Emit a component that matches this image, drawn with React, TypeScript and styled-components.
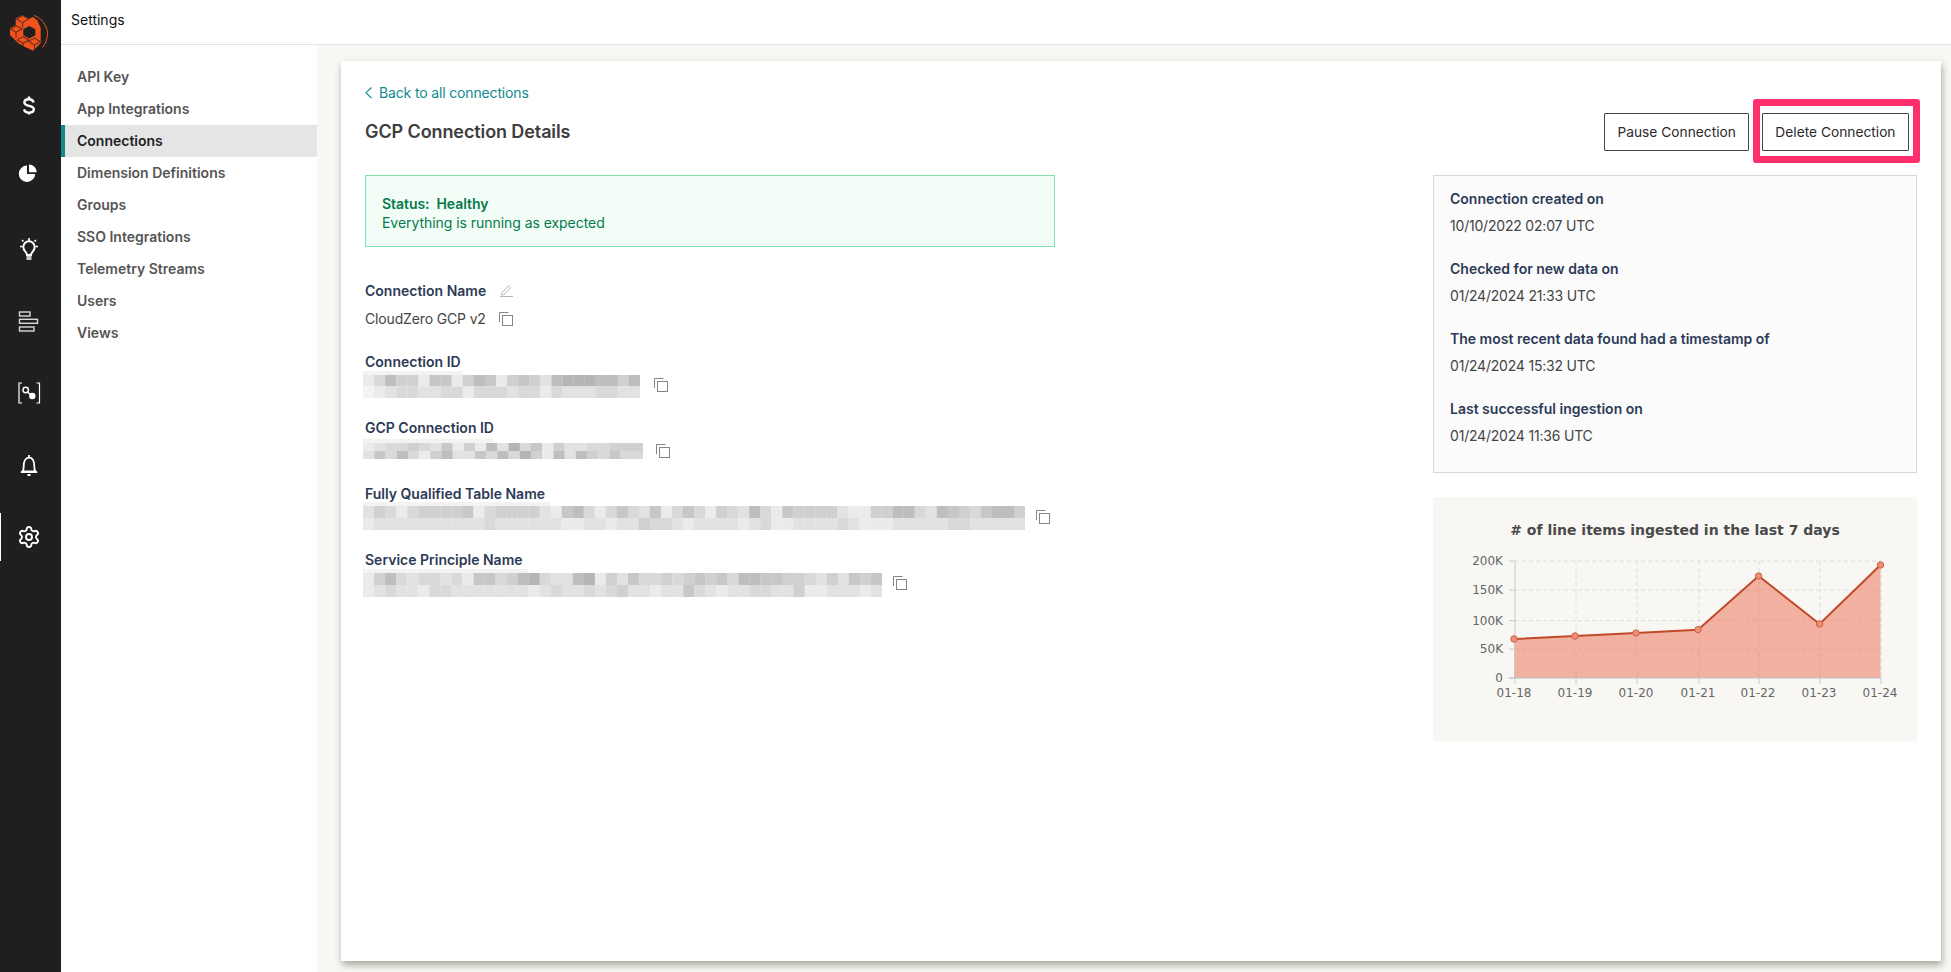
import React from "react";
import styled, { createGlobalStyle } from "styled-components";
import { Settings as SettingsIcon } from "lucide-react";

const GlobalStyle = createGlobalStyle`
  html, body {
    margin: 0;
    padding: 0;
    height: 100%;
    overflow: hidden;
    background: #f8f7f4;
    font-family: Inter, "Liberation Sans", sans-serif;
  }
  * {
    box-sizing: border-box;
  }
`;

const NAV_ITEMS = [
  "API Key",
  "App Integrations",
  "Connections",
  "Dimension Definitions",
  "Groups",
  "SSO Integrations",
  "Telemetry Streams",
  "Users",
  "Views",
];

const INFO_ROWS = [
  { label: "Connection created on", value: "10/10/2022 02:07 UTC" },
  { label: "Checked for new data on", value: "01/24/2024 21:33 UTC" },
  { label: "The most recent data found had a timestamp of", value: "01/24/2024 15:32 UTC" },
  { label: "Last successful ingestion on", value: "01/24/2024 11:36 UTC" },
];

// each string is a row of blurred cells, 0 lightest to 9 darkest
const REDACTED_FIELDS = [
  {
    label: "Connection ID",
    width: 277,
    height: 27,
    top: 0,
    gap: 14,
    iconShift: 0,
    faint: 100,
    rows: ["1364415514651454267776646", "0123322331333233132223322"],
  },
  {
    label: "GCP Connection ID",
    width: 280,
    height: 20,
    top: 2,
    gap: 13,
    iconShift: 3,
    faint: 130,
    rows: ["1233432514162735142233444", "2536314622536374162643533"],
  },
  {
    label: "Fully Qualified Table Name",
    width: 662,
    height: 28,
    top: -1,
    gap: 11,
    iconShift: 2,
    faint: 187,
    rows: [
      "243134444513444421563135325135314326315444421144663265435664",
      "122222222223222222112212243321222212311222232111222223322222",
    ],
  },
  {
    label: "Service Principle Name",
    width: 519,
    height: 28,
    top: 0,
    gap: 11,
    iconShift: 0,
    faint: 165,
    rows: [
      "14632332315534673226714253343454536655443242545",
      "12322133222222212322323422122532122332241122212",
    ],
  },
];

const PLOT_X = [82, 143, 204, 266, 326, 387, 448];
const PLOT_Y = [
  { y: 16, label: "200K" },
  { y: 45, label: "150K" },
  { y: 75.7, label: "100K" },
  { y: 104, label: "50K" },
  { y: 133, label: "0" },
];
const DAYS = ["01-18", "01-19", "01-20", "01-21", "01-22", "01-23", "01-24"];
const POINTS = [
  [81, 94],
  [142, 91],
  [203, 88],
  [265, 84.7],
  [325.6, 31],
  [386.6, 79],
  [447.5, 20],
];

const CopyIcon = () => (
  <CopyGlyph viewBox="0 0 14 14" fill="none" stroke="#858585" strokeWidth="1">
    <path d="M.5 10V.5h9" />
    <rect x="3.5" y="3.5" width="10" height="10" />
  </CopyGlyph>
);

const PencilIcon = () => (
  <svg width="13" height="12" viewBox="0 0 13 12" fill="none" stroke="#adadad" strokeWidth="0.9">
    <path d="M1.500 8.500 8 1.200a1 1 0 0 1 1.500 0l.6.6a1 1 0 0 1 0 1.400L3.700 10H1.500z" />
    <path d="M0 11.500h13" />
  </svg>
);

const Logo = () => (
  <svg width="61" height="60" viewBox="0 0 61 60">
    <path d="M34 15.500c8 2.500 13.500 11 13.500 18 0 6-2.200 10.500-5 14" fill="none" stroke="#f1511b" strokeWidth="1" />
    <path d="M22.700 15l6.300 3.700 4-1.700 4.500 3.500 3.200 7.500v15l-7.400 7.700-8.300-3.700-6.700-3.700L10 35v-6.700l5.700-3.300v-6.700z" fill="#f1511b" />
    <path d="M29.300 26l6 3.300v6l-6 3.300-6-3.300v-6z" fill="#1f1f1f" />
    <g fill="#f1511b" stroke="#1f1f1f" strokeWidth="0.8">
      <path d="M16.500 19l6.200-3.500 5.800 3.500-5.800 3.500z" />
      <path d="M10.500 29l5.500-3.300 6 3.300-6 3.300z" />
      <path d="M17 40l6-3.300 6 3.300-6 3.300z" />
      <path d="M28.500 41.500l6-3.500 5.700 3.500-5.700 3.500z" />
      <path d="M22.700 22.500v5M16 32.300v5.500M23 43.300v3.500M34.500 45v5.500" fill="none" />
    </g>
  </svg>
);

const RailIcon = ({ name }: { name: string }) => {
  if (name === "dollar") {
    return (
      <svg width="32" height="32" viewBox="0 0 32 32" fill="none" stroke="#fff" strokeWidth="2.400">
        <path d="M20.500 13.500c-.4-2-2-3.200-4.500-3.200-2.800 0-4.600 1.300-4.600 3.200 0 4.600 9.400 2.300 9.400 6.800 0 2-2 3.300-4.800 3.300-2.600 0-4.500-1.100-5-3.200" />
        <path d="M16 7.500v3M16 23v2.500" />
      </svg>
    );
  }
  if (name === "pie") {
    return (
      <svg width="32" height="32" viewBox="0 0 32 32" fill="#fff">
        <path d="M14 4.500a8.200 8.200 0 1 0 8.200 8.400H14z" />
        <path d="M16 3.500a8 8 0 0 1 7.800 7.800H16z" />
      </svg>
    );
  }
  if (name === "bulb") {
    return (
      <svg width="32" height="32" viewBox="0 0 32 32" fill="none" stroke="#fff" strokeWidth="1.600">
        <path d="M14 22c0-3-3.700-4-3.700-8a5.700 5.700 0 0 1 11.400 0c0 4-3.700 5-3.700 8z" strokeWidth="2" />
        <path d="M13.500 24h5M13.500 26h5M16 5v3M7 13.500h2.500M22.500 13.500H25M9 7l1.500 1.500M23 7l-1.500 1.500" />
      </svg>
    );
  }
  if (name === "bars") {
    return (
      <svg width="32" height="32" viewBox="0 0 32 32" fill="none" stroke="#d8d8d8" strokeWidth="1.400">
        <rect x="6.500" y="7" width="10.500" height="4" />
        <rect x="6.500" y="14.300" width="18" height="4" />
        <rect x="6.500" y="22" width="14.500" height="4" />
      </svg>
    );
  }
  if (name === "brackets") {
    return (
      <svg width="32" height="32" viewBox="0 0 32 32" fill="none" stroke="#fff">
        <path d="M9 6h-3v20h3M23.500 6h3v20h-3" strokeWidth="1.200" />
        <circle cx="12.700" cy="13" r="2.700" strokeWidth="1.500" />
        <path d="M14.500 15l3 2.500" strokeWidth="1.500" />
        <circle cx="19.300" cy="19" r="3.200" fill="#fff" stroke="none" />
      </svg>
    );
  }
  return (
    <svg width="32" height="32" viewBox="0 0 32 32" fill="none" stroke="#fff" strokeWidth="1.800">
      <path d="M16 6v2M9.500 22.500c1-1 1.200-2 1.200-5 0-5.500 2-8.800 5.300-8.800s5.300 3.300 5.300 8.800c0 3 .2 4 1.200 5z" />
      <path d="M8 23h16M14.500 26h3" />
    </svg>
  );
};

const Redacted = ({
  width,
  height,
  faint,
  rows,
}: {
  width: number;
  height: number;
  faint: number;
  rows: string[];
}) => {
  const rowHeight = Math.min(12, (height - 4) / 2);
  const startY = height - rowHeight * 2;
  const cellWidth = width / rows[0].length;
  return (
    <svg width={width} height={height}>
      <rect x="0" y="0" width={faint} height={startY} fill="#f3f3f3" />
      {rows.map((row, r) =>
        row.split("").map((shade, c) => {
          const level = 244 - Number(shade) * 9;
          return (
            <rect
              key={r + "-" + c}
              x={c * cellWidth}
              y={startY + r * rowHeight}
              width={cellWidth + 0.2}
              height={rowHeight}
              fill={`rgb(${level},${level},${level})`}
            />
          );
        })
      )}
    </svg>
  );
};

export default function App() {
  return (
    <Page>
      <GlobalStyle />
      <Rail>
        <LogoSlot>
          <Logo />
        </LogoSlot>
        {["dollar", "pie", "bulb", "bars", "brackets", "bell"].map((name) => (
          <RailItem key={name}>
            <RailIcon name={name} />
          </RailItem>
        ))}
        <RailItem $active>
          <SettingsIcon size={24} color="#fff" strokeWidth={1.9} />
        </RailItem>
      </Rail>
      <Body>
        <TopBar>Settings</TopBar>
        <Columns>
          <SideNav>
            {NAV_ITEMS.map((item) => (
              <NavItem key={item} $active={item === "Connections"}>
                {item}
              </NavItem>
            ))}
          </SideNav>
          <Content>
            <Card>
              <BackLink>
                <svg width="8" height="12" viewBox="0 0 8 12" fill="none" stroke="#0f8a8f" strokeWidth="1.100">
                  <path d="M6.500.5 1 5.700l5.500 5.500" />
                </svg>
                Back to all connections
              </BackLink>
              <TitleRow>
                <Title>GCP Connection Details</Title>
                <Actions>
                  <ActionButton>Pause Connection</ActionButton>
                  <Highlighted>
                    <ActionButton>Delete Connection</ActionButton>
                    <HighlightRing />
                  </Highlighted>
                </Actions>
              </TitleRow>
              <DetailColumns>
                <LeftColumn>
                  <StatusBox>
                    <StatusTitle>Status:&nbsp; Healthy</StatusTitle>
                    <div>Everything is running as expected</div>
                  </StatusBox>
                  <NameLabelRow>
                    <FieldLabel>Connection Name</FieldLabel>
                    <PencilIcon />
                  </NameLabelRow>
                  <NameValueRow>
                    <span>CloudZero GCP v2</span>
                    <CopyIcon />
                  </NameValueRow>
                  {REDACTED_FIELDS.map((field) => (
                    <Field key={field.label}>
                      <FieldLabel>{field.label}</FieldLabel>
                      <RedactedRow $top={field.top} $gap={field.gap} $iconShift={field.iconShift}>
                        <Redacted
                          width={field.width}
                          height={field.height}
                          faint={field.faint}
                          rows={field.rows}
                        />
                        <CopyIcon />
                      </RedactedRow>
                    </Field>
                  ))}
                </LeftColumn>
                <RightColumn>
                  <InfoPanel>
                    {INFO_ROWS.map((row) => (
                      <InfoRow key={row.label}>
                        <FieldLabel>{row.label}</FieldLabel>
                        <InfoValue>{row.value}</InfoValue>
                      </InfoRow>
                    ))}
                  </InfoPanel>
                  <ChartPanel>
                    <ChartTitle># of line items ingested in the last 7 days</ChartTitle>
                    <svg width="484" height="196" viewBox="0 0 484 196">
                      {PLOT_Y.slice(0, 4).map((t) => (
                        <line key={t.label} x1="82" x2="448" y1={t.y} y2={t.y} stroke="#dcdcdc" strokeDasharray="4 3" />
                      ))}
                      {PLOT_X.slice(1).map((x) => (
                        <line key={x} x1={x} x2={x} y1="16" y2="133" stroke="#dcdcdc" strokeDasharray="4 3" />
                      ))}
                      <polygon
                        points={`81,133 ${POINTS.map((p) => p.join(",")).join(" ")} 447.5,133`}
                        fill="#ee7a5f"
                        fillOpacity="0.56"
                      />
                      <line x1="82" x2="82" y1="16" y2="133" stroke="#c8c8c8" />
                      <line x1="76" x2="448" y1="133" y2="133" stroke="#bdbdc4" />
                      {PLOT_Y.map((t) => (
                        <React.Fragment key={t.label}>
                          <line x1="76" x2="82" y1={t.y} y2={t.y} stroke="#c8c8c8" />
                          <AxisText x="70" y={t.y + 4} textAnchor="end">
                            {t.label}
                          </AxisText>
                        </React.Fragment>
                      ))}
                      {PLOT_X.map((x, i) => (
                        <React.Fragment key={x}>
                          <line x1={x} x2={x} y1="133" y2="139" stroke="#c8c8c8" />
                          <AxisText x={x - 1} y="152" textAnchor="middle">
                            {DAYS[i]}
                          </AxisText>
                        </React.Fragment>
                      ))}
                      <polyline
                        points={POINTS.map((p) => p.join(",")).join(" ")}
                        fill="none"
                        stroke="#c04a28"
                        strokeWidth="2"
                      />
                      {POINTS.map((p) => (
                        <circle key={p[0]} cx={p[0]} cy={p[1]} r="3.200" fill="#ee9078" stroke="#cf5f43" />
                      ))}
                    </svg>
                  </ChartPanel>
                </RightColumn>
              </DetailColumns>
            </Card>
          </Content>
        </Columns>
      </Body>
    </Page>
  );
}

const Page = styled.div`
  display: flex;
  height: 100vh;
  background: #f8f7f4;
`;

const Rail = styled.div`
  width: 61px;
  flex-shrink: 0;
  background: #1f1f1f;
`;

const LogoSlot = styled.div`
  height: 69px;
`;

const RailItem = styled.div<{ $active?: boolean }>`
  position: relative;
  height: 72px;
  padding-right: 3px;
  display: flex;
  align-items: center;
  justify-content: center;
  ${(p) =>
    p.$active &&
    `&::before {
      content: "";
      position: absolute;
      left: 0;
      top: 12px;
      width: 1px;
      height: 48px;
      background: #fff;
    }`}
`;

const Body = styled.div`
  flex: 1;
  min-width: 0;
  display: flex;
  flex-direction: column;
`;

const TopBar = styled.div`
  height: 45px;
  flex-shrink: 0;
  padding: 11px 0 0 10px;
  background: #fff;
  border-bottom: 1px solid #e3e3e3;
  font-size: 14px;
  line-height: 18px;
  color: #111;
`;

const Columns = styled.div`
  flex: 1;
  display: flex;
  min-height: 0;
`;

const SideNav = styled.div`
  width: 256px;
  flex-shrink: 0;
  padding-top: 16px;
  background: #fff;
`;

const NavItem = styled.div<{ $active?: boolean }>`
  height: 32px;
  padding-left: ${(p) => (p.$active ? "12px" : "16px")};
  padding-bottom: 1px;
  display: flex;
  align-items: center;
  font-size: 14px;
  font-weight: 600;
  color: ${(p) => (p.$active ? "#1f1f1f" : "#555")};
  background: ${(p) => (p.$active ? "#e5e5e5" : "transparent")};
  border-left: ${(p) => (p.$active ? "4px solid #0f8a8f" : "none")};
`;

const Content = styled.div`
  flex: 1;
  min-width: 0;
  padding: 16px 10px 11px 24px;
`;

const Card = styled.div`
  height: 100%;
  padding: 23px 24px 0;
  background: #fff;
  box-shadow: 1px 4px 7px rgba(70, 70, 50, 0.45);
`;

const BackLink = styled.div`
  height: 18px;
  margin-bottom: 11px;
  display: flex;
  align-items: center;
  gap: 6px;
  font-size: 14px;
  line-height: 18px;
  letter-spacing: -0.15px;
  color: #0f8a8f;
`;

const TitleRow = styled.div`
  height: 38px;
  margin-bottom: 24px;
  padding-right: 8px;
  display: flex;
  align-items: center;
  justify-content: space-between;
`;

const Title = styled.div`
  padding-bottom: 1px;
  font-size: 18px;
  font-weight: 600;
  letter-spacing: -0.1px;
  color: #3d3d3d;
`;

const Actions = styled.div`
  display: flex;
  gap: 12.5px;
`;

const ActionButton = styled.button`
  height: 38px;
  padding: 0 12.5px;
  background: #fff;
  border: 1px solid #444;
  border-radius: 1px;
  font-family: inherit;
  font-size: 13.75px;
  color: #2a2a2a;
`;

const Highlighted = styled.div`
  position: relative;
`;

const HighlightRing = styled.div`
  position: absolute;
  top: -14px;
  right: -11px;
  bottom: -12px;
  left: -9px;
  border: 7px solid #ff2e6d;
  border-radius: 3px;
`;

const DetailColumns = styled.div`
  display: flex;
  justify-content: space-between;
`;

const LeftColumn = styled.div`
  width: 690px;
`;

const StatusBox = styled.div`
  height: 72px;
  margin-bottom: 35px;
  padding: 5px 16px 0;
  display: flex;
  flex-direction: column;
  justify-content: center;
  gap: 1px;
  background: #f3fdf8;
  border: 1px solid #7fe3ae;
  font-size: 14px;
  line-height: 18px;
  letter-spacing: -0.05px;
  color: #067a49;
`;

const StatusTitle = styled.div`
  font-weight: 600;
`;

const FieldLabel = styled.div`
  font-size: 14px;
  font-weight: 600;
  line-height: 18px;
  color: #2d3a55;
`;

const NameLabelRow = styled.div`
  display: flex;
  align-items: center;
  gap: 14px;
`;

const NameValueRow = styled.div`
  height: 18px;
  margin: 10px 0 25px;
  display: flex;
  align-items: center;
  gap: 13px;
  font-size: 14px;
  line-height: 18px;
  letter-spacing: -0.15px;
  color: #444;
`;

const Field = styled.div`
  height: 66px;
`;

const RedactedRow = styled.div<{ $top: number; $gap: number; $iconShift: number }>`
  margin-top: ${(p) => p.$top}px;
  margin-left: -2px;
  display: flex;
  align-items: center;
  gap: ${(p) => p.$gap}px;
  > svg:last-child {
    margin-top: ${(p) => p.$iconShift}px;
  }
`;

const CopyGlyph = styled.svg`
  width: 14px;
  height: 14px;
  flex-shrink: 0;
`;

const RightColumn = styled.div`
  width: 484px;
`;

const InfoPanel = styled.div`
  height: 298px;
  margin-bottom: 24px;
  padding: 14px 16px;
  background: #fbfbfc;
  border: 1px solid #d5d8e0;
`;

const InfoRow = styled.div`
  margin-bottom: 25px;
`;

const InfoValue = styled.div`
  margin-top: 9px;
  font-size: 14px;
  line-height: 18px;
  letter-spacing: -0.2px;
  color: #444;
`;

const ChartPanel = styled.div`
  height: 244px;
  padding-top: 24px;
  background: #f8f7f4;
`;

const ChartTitle = styled.div`
  height: 24px;
  text-align: center;
  font-family: "DejaVu Sans", sans-serif;
  font-size: 14px;
  font-weight: 700;
  line-height: 18px;
  color: #4a4a4a;
`;

const AxisText = styled.text`
  font-family: "DejaVu Sans", sans-serif;
  font-size: 12px;
  fill: #666;
`;
